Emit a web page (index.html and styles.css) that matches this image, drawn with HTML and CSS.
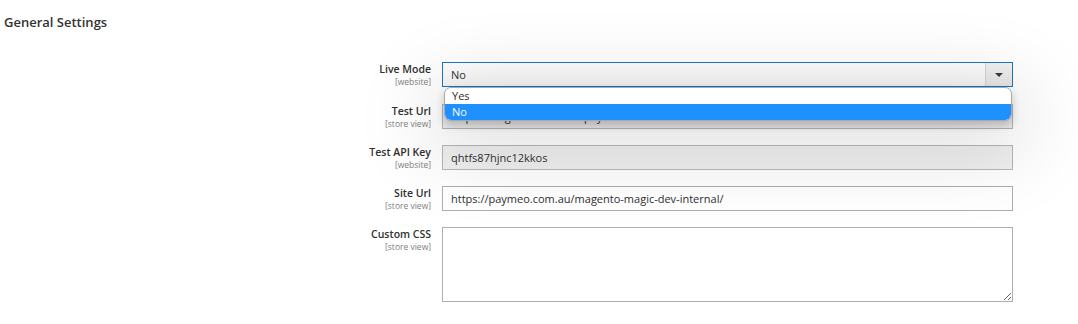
FILE: index.html
```html
<!DOCTYPE html>
<html>
<head>
<meta charset="utf-8">
<link rel="stylesheet" href="styles.css">
</head>
<body>
<div class="page">
  <h2 class="section-title">General Settings</h2>
  <div class="form">
    <div class="row first">
      <div class="label"><span class="name">Live Mode</span><span class="scope">[website]</span></div>
      <div class="control">
        <div class="select focused">
          <span class="value">No</span>
          <span class="arrow-btn"><span class="arrow"></span></span>
        </div>
        <div class="dropdown">
          <div class="opt">Yes</div>
          <div class="opt selected">No</div>
        </div>
      </div>
    </div>
    <div class="row">
      <div class="label"><span class="name">Test Url</span><span class="scope">[store view]</span></div>
      <div class="control"><div class="input disabled">https://magento.sandbox.paymeo.com/</div></div>
    </div>
    <div class="row">
      <div class="label"><span class="name">Test API Key</span><span class="scope">[website]</span></div>
      <div class="control"><div class="input disabled">qhtfs87hjnc12kkos</div></div>
    </div>
    <div class="row">
      <div class="label"><span class="name">Site Url</span><span class="scope">[store view]</span></div>
      <div class="control"><div class="input">https://paymeo.com.au/magento-magic-dev-internal/</div></div>
    </div>
    <div class="row">
      <div class="label"><span class="name">Custom CSS</span><span class="scope">[store view]</span></div>
      <div class="control"><textarea class="textarea"></textarea></div>
    </div>
  </div>
</div>
</body>
</html>
```

FILE: styles.css
```css
html, body {
  margin: 0;
  padding: 0;
  background: #fff;
  font-family: "Open Sans", "Liberation Sans", sans-serif;
  color: #303030;
}
.page {
  padding: 12px 0 20px 4px;
}
.section-title {
  margin: 0;
  font-size: 13px;
  font-weight: 600;
  line-height: 20px;
  color: #333333;
}
.form {
  margin-top: 30px;
  display: flex;
  flex-direction: column;
  gap: 16px;
}
.row {
  display: flex;
  align-items: flex-start;
  min-height: 25px;
}
.row.first {
  margin-bottom: 1px;
}
.label {
  width: 427px;
  flex: none;
  display: flex;
  flex-direction: column;
  align-items: flex-end;
  padding-top: 1px;
}
.name {
  font-size: 10.5px;
  font-weight: 600;
  line-height: 13px;
  color: #303030;
}
.scope {
  font-size: 8.5px;
  line-height: 11px;
  color: #808080;
}
.control {
  margin-left: 11px;
  width: 571px;
  position: relative;
}
.select, .input {
  box-sizing: border-box;
  height: 25px;
  border: 1px solid #adadad;
  font-size: 11px;
  line-height: 23px;
  padding-left: 8px;
  color: #303030;
}
.select {
  display: flex;
  justify-content: space-between;
  background: linear-gradient(#ffffff, #f6f6f6);
}
.select.focused {
  border-color: #1979c3;
}
.arrow-btn {
  width: 26px;
  border-left: 1px solid #d4d4d4;
  background: linear-gradient(#f2f2f2, #e6e6e6);
  display: flex;
  align-items: center;
  justify-content: center;
}
.arrow {
  width: 0;
  height: 0;
  border-left: 4px solid transparent;
  border-right: 4px solid transparent;
  border-top: 4px solid #41362f;
}
.input.disabled {
  background: #f0f0f0;
  border-color: #b7b7b7;
  color: #303030;
}
.textarea {
  display: block;
  box-sizing: border-box;
  width: 571px;
  height: 75px;
  border: 1px solid #adadad;
  margin: 0;
  padding: 4px 8px;
  font-family: inherit;
  font-size: 11px;
  resize: both;
  background: #fff;
}
.dropdown {
  position: absolute;
  top: 25px;
  left: 2px;
  width: 568px;
  box-sizing: border-box;
  border: 1px solid #a9a9a9;
  border-radius: 7px;
  background: #fff;
  overflow: hidden;
  z-index: 10;
  box-shadow: 0 4px 8px rgba(0,0,0,0.2), 0 14px 80px 14px rgba(0,0,0,0.15);
}
.opt {
  font-size: 11px;
  line-height: 16px;
  height: 16px;
  padding-left: 7px;
  color: #303030;
}
.opt.selected {
  background: #1e90ff;
  color: #fff;
}
```
